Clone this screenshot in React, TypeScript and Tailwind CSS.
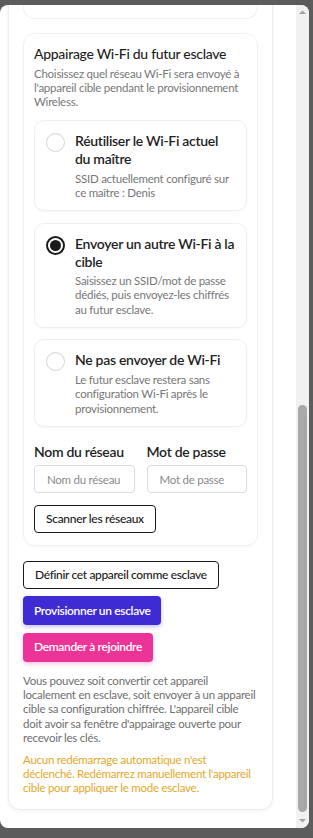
import React from "react";

const font = { fontFamily: "Lato, 'Noto Sans', sans-serif" };

function Radio({ checked }: { checked?: boolean }) {
  return checked ? (
    <div className="mt-[1px] flex h-[19px] w-[19px] shrink-0 items-center justify-center rounded-full border-[2px] border-[#1a1a1a] bg-white">
      <div className="h-[11px] w-[11px] rounded-full bg-[#1a1a1a]" />
    </div>
  ) : (
    <div className="mt-[1px] h-[19px] w-[19px] shrink-0 rounded-full border border-[#d6d6d6] bg-white shadow-[inset_0_1px_1px_rgba(0,0,0,0.04)]" />
  );
}

function Option({ title, desc, checked }: { title: string; desc: string; checked?: boolean }) {
  return (
    <div className="flex gap-[10px] rounded-[10px] border border-[#efefef] pl-[11px] pr-[10px] pt-[11px] pb-[10px] shadow-[0_1px_2px_rgba(0,0,0,0.03)]">
      <Radio checked={checked} />
      <div className="flex flex-col">
        <div className="text-[14px] font-semibold leading-[18px] tracking-[-0.3px] text-[#1f1f1f]">{title}</div>
        <div className="mt-[3.5px] text-[11.5px] leading-[14.3px] tracking-[-0.25px] text-[#777]">{desc}</div>
      </div>
    </div>
  );
}

export default function App() {
  return (
    <div className="h-[838px] w-[313px] overflow-hidden bg-[#5c5c5c] pt-[5px]" style={font}>
      <div className="flex h-[823px] w-[309px] overflow-hidden rounded-lg bg-white">
        <div className="relative flex-1 overflow-hidden pl-[8px]">
          <div className="-mt-[40px] w-[265px] rounded-[12px] border border-[#ececec] bg-white px-[14px] pb-[13px] shadow-[0_1px_4px_rgba(0,0,0,0.06)]">
            <div className="h-[53px] overflow-hidden whitespace-nowrap rounded-b-[12px] border border-t-0 border-[#f1f1f1] px-[11px] pt-[26px] text-[11.5px] leading-[14px] tracking-[-0.25px] text-[#777]">
              Ce paramètre peut être configuré plus tard
            </div>
            <div className="mt-[14px] rounded-[12px] border border-[#f0f0f0] px-[10px] pt-[11px] pb-[12px] shadow-[0_1px_3px_rgba(0,0,0,0.04)]">
              <div className="text-[14px] font-medium leading-[18px] tracking-[-0.3px] text-[#1f1f1f]">
                Appairage Wi-Fi du futur esclave
              </div>
              <div className="mt-[4px] text-[11.5px] leading-[14px] tracking-[-0.25px] text-[#777]">
                Choisissez quel réseau Wi-Fi sera envoyé à l'appareil cible pendant le provisionnement Wireless.
              </div>
              <div className="mt-[11px] flex flex-col gap-[11.5px]">
                <Option title="Réutiliser le Wi-Fi actuel du maître" desc="SSID actuellement configuré sur ce maître : Denis" />
                <Option checked title="Envoyer un autre Wi-Fi à la cible" desc="Saisissez un SSID/mot de passe dédiés, puis envoyez-les chiffrés au futur esclave." />
                <Option title="Ne pas envoyer de Wi-Fi" desc="Le futur esclave restera sans configuration Wi-Fi après le provisionnement." />
              </div>
              <div className="mt-[16.5px] grid grid-cols-2 gap-[12px]">
                <div className="flex flex-col gap-[4px]">
                  <div className="text-[14px] font-semibold leading-[18px] tracking-[-0.3px] text-[#1f1f1f]">Nom du réseau</div>
                  <div className="flex h-[28px] items-center whitespace-nowrap rounded-[4px] border border-[#dcdcdc] px-[12px] text-[11.5px] tracking-[-0.25px] text-[#8a8a8a]">
                    Nom du réseau
                  </div>
                </div>
                <div className="flex flex-col gap-[4px]">
                  <div className="text-[14px] font-semibold leading-[18px] tracking-[-0.3px] text-[#1f1f1f]">Mot de passe</div>
                  <div className="flex h-[28px] items-center whitespace-nowrap rounded-[4px] border border-[#dcdcdc] px-[12px] text-[11.5px] tracking-[-0.25px] text-[#8a8a8a]">
                    Mot de passe
                  </div>
                </div>
              </div>
              <div className="mt-[12px] flex">
                <div className="flex h-[28px] items-center whitespace-nowrap rounded-[4px] border border-[#1a1a1a] px-[11px] text-[12px] font-medium tracking-[-0.3px] text-[#1a1a1a]">
                  Scanner les réseaux
                </div>
              </div>
            </div>
            <div className="mt-[15px] flex flex-col items-start gap-[7.5px]">
              <div className="flex h-[27.5px] items-center whitespace-nowrap rounded-[4px] border border-[#1a1a1a] px-[11px] text-[12px] font-medium tracking-[-0.35px] text-[#1a1a1a]">
                Définir cet appareil comme esclave
              </div>
              <div className="flex h-[29px] items-center whitespace-nowrap rounded-[4px] bg-[#3f2bd4] px-[11px] text-[12px] font-semibold tracking-[-0.35px] text-white shadow-[0_2px_4px_rgba(63,43,212,0.3)]">
                Provisionner un esclave
              </div>
              <div className="flex h-[29px] items-center whitespace-nowrap rounded-[4px] bg-[#ec3498] px-[11px] text-[12px] font-semibold tracking-[-0.35px] text-white shadow-[0_2px_4px_rgba(236,52,152,0.3)]">
                Demander à rejoindre
              </div>
            </div>
            <div className="mt-[12px] text-[11.5px] leading-[14.3px] tracking-[-0.25px] text-[#6f6f6f]">
              Vous pouvez soit convertir cet appareil localement en esclave, soit envoyer à un appareil cible sa configuration chiffrée. L'appareil cible doit avoir sa fenêtre d'appairage ouverte pour recevoir les clés.
            </div>
            <div className="mt-[7.5px] text-[11.5px] leading-[14.3px] tracking-[-0.25px] text-[#e4a82b]">
              Aucun redémarrage automatique n'est déclenché. Redémarrez manuellement l'appareil cible pour appliquer le mode esclave.
            </div>
          </div>
        </div>
        <div className="flex w-[13px] flex-col items-center bg-[#f1f1f1]">
          <svg width="13" height="14" viewBox="0 0 13 14" className="shrink-0">
            <path d="M3 9 L6.5 5.5 L10 9 Z" fill="#a3a3a3" />
          </svg>
          <div className="flex-1 w-full px-[2px] pt-[386px] pb-[2px]">
            <div className="h-full w-full rounded-full bg-[#a8a8a8]" />
          </div>
          <svg width="13" height="14" viewBox="0 0 13 14" className="shrink-0">
            <path d="M3 5 L10 5 L6.5 8.5 Z" fill="#a3a3a3" />
          </svg>
        </div>
      </div>
    </div>
  );
}
